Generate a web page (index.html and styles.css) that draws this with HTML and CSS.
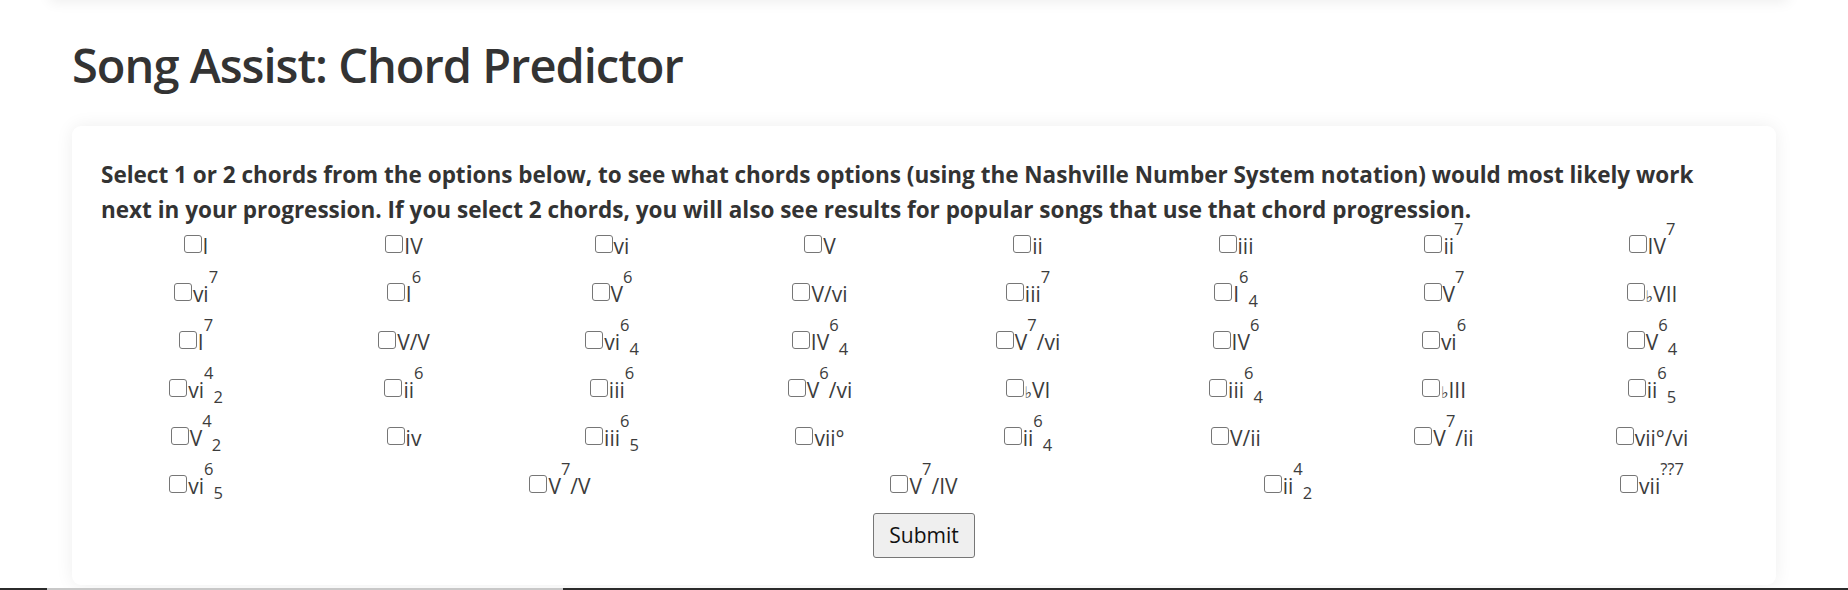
FILE: index.html
```html
<!DOCTYPE html>
<html lang="en">
<head>
<meta charset="utf-8">
<title>Song Assist: Chord Predictor</title>
<link rel="stylesheet" href="styles.css">
</head>
<body>
<div class="topbar"></div>
<main class="container">
  <h1 class="title">Song Assist: Chord Predictor</h1>
  <section class="card">
    <p class="intro">Select 1 or 2 chords from the options below, to see what chords options (using the Nashville Number System notation) would most likely work next in your progression. If you select 2 chords, you will also see results for popular songs that use that chord progression.</p>
    <form class="chords">
      <div class="chord-row">
        <label class="chord"><input type="checkbox" class="box">I</label>
        <label class="chord"><input type="checkbox" class="box">IV</label>
        <label class="chord"><input type="checkbox" class="box">vi</label>
        <label class="chord"><input type="checkbox" class="box">V</label>
        <label class="chord"><input type="checkbox" class="box">ii</label>
        <label class="chord"><input type="checkbox" class="box">iii</label>
        <label class="chord"><input type="checkbox" class="box">ii<sup>7</sup></label>
        <label class="chord"><input type="checkbox" class="box">IV<sup>7</sup></label>
      </div>
      <div class="chord-row">
        <label class="chord"><input type="checkbox" class="box">vi<sup>7</sup></label>
        <label class="chord"><input type="checkbox" class="box">I<sup>6</sup></label>
        <label class="chord"><input type="checkbox" class="box">V<sup>6</sup></label>
        <label class="chord"><input type="checkbox" class="box">V/vi</label>
        <label class="chord"><input type="checkbox" class="box">iii<sup>7</sup></label>
        <label class="chord"><input type="checkbox" class="box">I<sup>6</sup><sub>4</sub></label>
        <label class="chord"><input type="checkbox" class="box">V<sup>7</sup></label>
        <label class="chord"><input type="checkbox" class="box"><span class="flat">♭</span>VII</label>
      </div>
      <div class="chord-row">
        <label class="chord"><input type="checkbox" class="box">I<sup>7</sup></label>
        <label class="chord"><input type="checkbox" class="box">V/V</label>
        <label class="chord"><input type="checkbox" class="box">vi<sup>6</sup><sub>4</sub></label>
        <label class="chord"><input type="checkbox" class="box">IV<sup>6</sup><sub>4</sub></label>
        <label class="chord"><input type="checkbox" class="box">V<sup>7</sup>/vi</label>
        <label class="chord"><input type="checkbox" class="box">IV<sup>6</sup></label>
        <label class="chord"><input type="checkbox" class="box">vi<sup>6</sup></label>
        <label class="chord"><input type="checkbox" class="box">V<sup>6</sup><sub>4</sub></label>
      </div>
      <div class="chord-row">
        <label class="chord"><input type="checkbox" class="box">vi<sup>4</sup><sub>2</sub></label>
        <label class="chord"><input type="checkbox" class="box">ii<sup>6</sup></label>
        <label class="chord"><input type="checkbox" class="box">iii<sup>6</sup></label>
        <label class="chord"><input type="checkbox" class="box">V<sup>6</sup>/vi</label>
        <label class="chord"><input type="checkbox" class="box"><span class="flat">♭</span>VI</label>
        <label class="chord"><input type="checkbox" class="box">iii<sup>6</sup><sub>4</sub></label>
        <label class="chord"><input type="checkbox" class="box"><span class="flat">♭</span>III</label>
        <label class="chord"><input type="checkbox" class="box">ii<sup>6</sup><sub>5</sub></label>
      </div>
      <div class="chord-row">
        <label class="chord"><input type="checkbox" class="box">V<sup>4</sup><sub>2</sub></label>
        <label class="chord"><input type="checkbox" class="box">iv</label>
        <label class="chord"><input type="checkbox" class="box">iii<sup>6</sup><sub>5</sub></label>
        <label class="chord"><input type="checkbox" class="box">vii°</label>
        <label class="chord"><input type="checkbox" class="box">ii<sup>6</sup><sub>4</sub></label>
        <label class="chord"><input type="checkbox" class="box">V/ii</label>
        <label class="chord"><input type="checkbox" class="box">V<sup>7</sup>/ii</label>
        <label class="chord"><input type="checkbox" class="box">vii°/vi</label>
      </div>
      <div class="chord-row">
        <label class="chord"><input type="checkbox" class="box">vi<sup>6</sup><sub>5</sub></label>
        <label class="chord"><input type="checkbox" class="box">V<sup>7</sup>/V</label>
        <label class="chord"><input type="checkbox" class="box">V<sup>7</sup>/IV</label>
        <label class="chord"><input type="checkbox" class="box">ii<sup>4</sup><sub>2</sub></label>
        <label class="chord"><input type="checkbox" class="box">vii<sup>??7</sup></label>
      </div>
      <div class="actions">
        <button type="submit" class="submit">Submit</button>
      </div>
    </form>
  </section>
</main>
<div class="bottom-strip">
  <span class="strip-dark strip-left"></span>
  <span class="strip-light"></span>
  <span class="strip-dark strip-right"></span>
</div>
</body>
</html>
```

FILE: styles.css
```css
html, body {
  margin: 0;
  padding: 0;
  background: #ffffff;
}

body {
  font-family: "Open Sans", "Noto Sans", "DejaVu Sans", sans-serif;
  color: #333333;
  height: 590px;
  overflow: hidden;
  display: flex;
  flex-direction: column;
}

.topbar {
  height: 40px;
  margin: -40px 60px 0 50px;
  background: #ffffff;
  box-shadow: 0 2px 14px rgba(0, 0, 0, 0.07);
}

.container {
  width: 1704px;
  margin: 0 auto;
  flex: 1;
  display: flex;
  flex-direction: column;
}

.title {
  font-size: 47px;
  font-weight: 600;
  letter-spacing: -1px;
  line-height: 1.2;
  margin: 37px 0 32.6px 0;
  color: #333333;
}

.card {
  flex: 1;
  background: #ffffff;
  border-radius: 9px;
  box-shadow: 0 0 18px rgba(0, 0, 0, 0.07);
  padding: 31px 20px 0 20px;
  margin-bottom: 3px;
}

.intro {
  margin: 0;
  padding: 0 34px 0 9px;
  font-weight: 700;
  font-size: 22.5px;
  line-height: 35px;
  color: #333333;
}

.chords {
  display: flex;
  flex-direction: column;
  gap: 12px;
  margin-top: 1px;
}

.chord-row {
  display: flex;
  justify-content: space-between;
}

.chord {
  width: 208px;
  text-align: center;
  font-size: 21px;
  line-height: 36px;
  color: #3c3c3c;
  white-space: nowrap;
}

.box {
  -webkit-appearance: none;
  appearance: none;
  width: 18px;
  height: 18px;
  margin: 0 1px 1px 0;
  border: 1px solid #767676;
  border-radius: 3px;
  background: #ffffff;
  vertical-align: baseline;
  box-sizing: border-box;
}

.flat {
  font-family: "DejaVu Sans", sans-serif;
  font-size: 16px;
  line-height: 0;
}

sup, sub {
  font-size: 16.5px;
  line-height: 0;
}

sup {
  vertical-align: 19px;
}

sub {
  vertical-align: -5px;
}

.actions {
  display: flex;
  justify-content: center;
  margin-top: -3px;
}

.submit {
  font-family: "Open Sans", "Noto Sans", sans-serif;
  font-size: 21px;
  line-height: 35px;
  padding: 4px 15px;
  color: #111111;
  background: #efefef;
  border: 1px solid #767676;
  border-radius: 3px;
}

.bottom-strip {
  display: flex;
  height: 2px;
  flex-shrink: 0;
}

.strip-dark {
  background: #2b2b2b;
}

.strip-left {
  width: 47px;
}

.strip-light {
  width: 516px;
  background: #c8c8c8;
}

.strip-right {
  flex: 1;
}
```
